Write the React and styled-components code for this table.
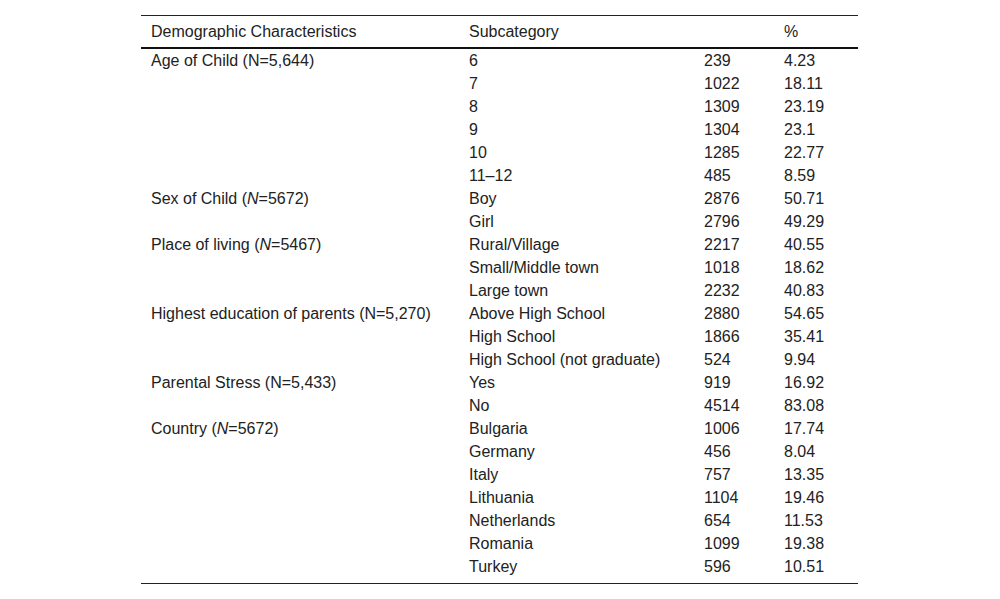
import React from "react";
import styled, { createGlobalStyle } from "styled-components";

const GlobalStyle = createGlobalStyle`
  html, body {
    margin: 0;
    padding: 0;
    background: #fff;
  }
  body {
    font-family: "Liberation Sans", Arial, sans-serif;
    color: #222;
  }
`;

const Page = styled.div`
  width: 1000px;
  height: 599px;
  padding-top: 15px;
  box-sizing: border-box;
  display: flex;
  justify-content: center;
`;

const Table = styled.table`
  width: 717px;
  margin-left: -1px;
  border-collapse: collapse;
  table-layout: fixed;
  font-size: 16px;
  line-height: 17px;
  border-top: 1px solid #222;
  border-bottom: 1px solid #222;
  align-self: flex-start;
`;

const HeadCell = styled.th`
  box-sizing: border-box;
  text-align: left;
  font-weight: normal;
  padding: 7px 10px 7px;
  border-bottom: 2px solid #111;
  width: ${({ $w }) => $w}px;
`;

const Cell = styled.td`
  padding: 3px 10px;
  vertical-align: top;
  white-space: nowrap;
`;

const Row = styled.tr`
  &:last-child td {
    padding-bottom: 8px;
  }
`;

const groups = [
  {
    label: <>Age of Child (N=5,644)</>,
    rows: [
      ["6", "239", "4.23"],
      ["7", "1022", "18.11"],
      ["8", "1309", "23.19"],
      ["9", "1304", "23.1"],
      ["10", "1285", "22.77"],
      ["11–12", "485", "8.59"],
    ],
  },
  {
    label: <>Sex of Child (<i>N</i>=5672)</>,
    rows: [
      ["Boy", "2876", "50.71"],
      ["Girl", "2796", "49.29"],
    ],
  },
  {
    label: <>Place of living (<i>N</i>=5467)</>,
    rows: [
      ["Rural/Village", "2217", "40.55"],
      ["Small/Middle town", "1018", "18.62"],
      ["Large town", "2232", "40.83"],
    ],
  },
  {
    label: <>Highest education of parents (N=5,270)</>,
    rows: [
      ["Above High School", "2880", "54.65"],
      ["High School", "1866", "35.41"],
      ["High School (not graduate)", "524", "9.94"],
    ],
  },
  {
    label: <>Parental Stress (N=5,433)</>,
    rows: [
      ["Yes", "919", "16.92"],
      ["No", "4514", "83.08"],
    ],
  },
  {
    label: <>Country (<i>N</i>=5672)</>,
    rows: [
      ["Bulgaria", "1006", "17.74"],
      ["Germany", "456", "8.04"],
      ["Italy", "757", "13.35"],
      ["Lithuania", "1104", "19.46"],
      ["Netherlands", "654", "11.53"],
      ["Romania", "1099", "19.38"],
      ["Turkey", "596", "10.51"],
    ],
  },
];

export default function App() {
  return (
    <>
      <GlobalStyle />
      <Page>
        <Table>
          <thead>
            <tr>
              <HeadCell $w={318}>Demographic Characteristics</HeadCell>
              <HeadCell $w={235}>Subcategory</HeadCell>
              <HeadCell $w={80}></HeadCell>
              <HeadCell $w={84}>%</HeadCell>
            </tr>
          </thead>
          <tbody>
            {groups.flatMap((g, gi) =>
              g.rows.map((r, ri) => (
                <Row key={`${gi}-${ri}`}>
                  <Cell>{ri === 0 ? g.label : ""}</Cell>
                  <Cell>{r[0]}</Cell>
                  <Cell>{r[1]}</Cell>
                  <Cell>{r[2]}</Cell>
                </Row>
              ))
            )}
          </tbody>
        </Table>
      </Page>
    </>
  );
}
